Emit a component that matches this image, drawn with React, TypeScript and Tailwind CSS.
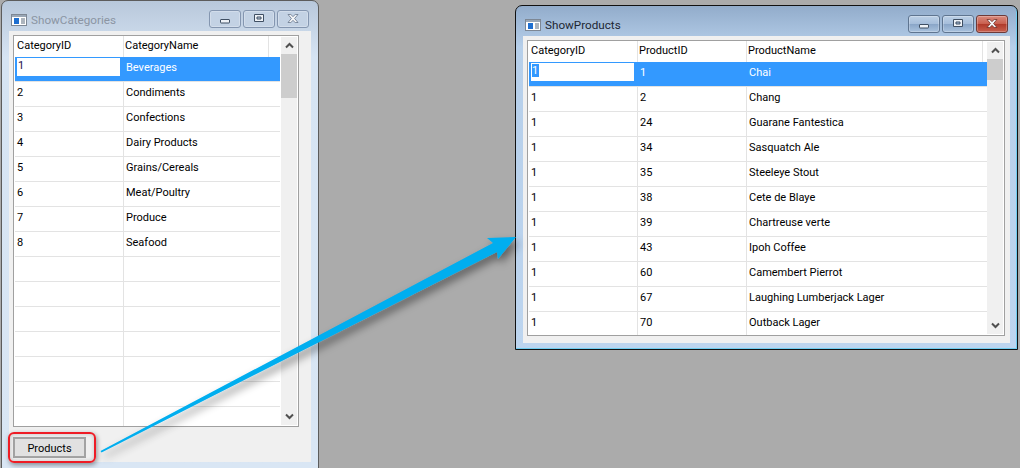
import React from 'react';

const categories = ['Beverages', 'Condiments', 'Confections', 'Dairy Products', 'Grains/Cereals', 'Meat/Poultry', 'Produce', 'Seafood'];

const products: [string, string][] = [
  ['1', 'Chai'],
  ['2', 'Chang'],
  ['24', 'Guarane Fantestica'],
  ['34', 'Sasquatch Ale'],
  ['35', 'Steeleye Stout'],
  ['38', 'Cete de Blaye'],
  ['39', 'Chartreuse verte'],
  ['43', 'Ipoh Coffee'],
  ['60', 'Camembert Pierrot'],
  ['67', 'Laughing Lumberjack Lager'],
  ['70', 'Outback Lager'],
];

const FormIcon: React.FC = () => (
  <svg width="16" height="12" viewBox="0 0 16 12" className="shrink-0">
    <rect x="0.5" y="0.5" width="15" height="11" fill="#ffffff" stroke="#7d8794" />
    <rect x="1" y="1" width="14" height="2" fill="#9aa7b6" />
    <rect x="3" y="4" width="5" height="6" fill="#1f6fd0" />
    <path d="M10 5h4M10 7h4M10 9h4" stroke="#5a6a7c" strokeWidth="1" />
  </svg>
);

const CaptionButton: React.FC<{ kind: 'min' | 'max' | 'close'; active: boolean }> = ({ kind, active }) => {
  const bg =
    kind === 'close' && active
      ? 'bg-[linear-gradient(#d98a7e_0%,#c9604f_48%,#b03a2a_52%,#c8604e_100%)] border-[#6e3a38]'
      : active
        ? 'bg-[linear-gradient(#bcd0e6_0%,#a6bedb_48%,#8aa6c8_52%,#a9c2de_100%)] border-[#5f7590]'
        : 'bg-[#c3d2e4] border-[#8496b0]';
  return (
    <div className={`w-8 h-[18px] rounded-[3px] border flex items-center justify-center shadow-[inset_0_0_0_1px_#ffffff40] ${bg}`}>
      <svg width="14" height="12" viewBox="0 0 14 12">
        {kind === 'min' && <rect x="2.5" y="6.5" width="9" height="3.5" rx="0.5" fill="#eef2f7" stroke="#3f4f63" />}
        {kind === 'max' && (
          <path fillRule="evenodd" d="M2.5 1.5h9v7h-9z M5 4v2h4V4z" fill="#eef2f7" stroke="#3f4f63" />
        )}
        {kind === 'close' && (
          <path d="M2 1.5h2.8L7 3.6l2.2-2.1H12L8.6 5.5 12 9.5H9.2L7 7.4 4.8 9.5H2l3.4-4z" fill="#f4f5f7" stroke={active ? '#6e2e26' : '#66758a'} strokeWidth="0.8" />
        )}
      </svg>
    </div>
  );
};

const Chevron: React.FC<{ up?: boolean }> = ({ up }) => (
  <svg width="9" height="7" viewBox="0 0 9 7" className={up ? '' : 'rotate-180'}>
    <path d="M1 5.5 4.5 2 8 5.5" fill="none" stroke="#505050" strokeWidth="2" />
  </svg>
);

const ScrollBar: React.FC<{ thumb: string }> = ({ thumb }) => (
  <div className="w-[16px] bg-[#f0f0f0] flex flex-col items-center shrink-0 my-px">
    <div className="h-[17px] w-full shrink-0 flex items-center justify-center"><Chevron up /></div>
    <div className={`w-full shrink-0 bg-[#cdcdcd] ${thumb}`} />
    <div className="flex-1" />
    <div className="h-[17px] w-full shrink-0 flex items-center justify-center"><Chevron /></div>
  </div>
);

const HeaderCell: React.FC<{ w: string; pad?: string; children?: React.ReactNode }> = ({ w, pad = 'pl-px', children }) => (
  <div className={`${w} shrink-0 h-full border-r border-[#e3e3e3] flex items-center ${pad}`}>{children}</div>
);

const Cell: React.FC<{ w: string; children?: React.ReactNode; line?: boolean }> = ({ w, children, line = true }) => (
  <div className={`${w} shrink-0 h-full flex items-center overflow-hidden pl-[2px] pb-[2px] ${line ? 'border-r border-[#e3e3e3]' : ''}`}>{children}</div>
);

const Selected: React.FC<{ highlight?: boolean }> = ({ highlight }) => (
  <div className="absolute left-[2px] top-px w-[103px] h-[18px] bg-white text-[#20104a] leading-[15px] pl-px">
    <span className={highlight ? 'bg-[#3399ff] text-white pr-px' : ''}>1</span>
  </div>
);

const Win: React.FC<{ title: string; active: boolean; className: string; children: React.ReactNode }> = ({ title, active, className, children }) => (
  <div
    className={`absolute rounded-t-[7px] border flex flex-col px-[7px] pb-[6px] ${
      active
        ? 'bg-[linear-gradient(#92accb_0%,#b6cfea_12%,#bdd5ef_100%)] border-[#111111] shadow-[inset_-1px_-1px_0_#6fcdf0]'
        : 'bg-[linear-gradient(#b8c8db_0%,#d6e4f3_12%,#d9e6f4_100%)] border-[#5c5c5c]'
    } ${className}`}
  >
    <div className="h-[30px] shrink-0 flex items-center pl-[2px] pr-[2px] pt-[8px]">
      <div className="pr-[4px] flex items-center"><FormIcon /></div>
      <span className={`text-[11.7px] pt-[2px] ${active ? 'text-[#1d2733]' : 'text-[#8b95a3]'}`}>{title}</span>
      <div className="ml-auto flex gap-[2px] -mt-[2px]">
        <CaptionButton kind="min" active={active} />
        <CaptionButton kind="max" active={active} />
        <CaptionButton kind="close" active={active} />
      </div>
    </div>
    <div className="flex-1 min-h-0 bg-[#f0f0f0] flex flex-col">{children}</div>
  </div>
);

export default function App() {
  const emptyRows = Array.from({ length: 7 });

  return (
    <div className="relative w-[1020px] h-[468px] overflow-hidden bg-[#ababab] text-[11px] text-black font-['Roboto',sans-serif]">
      <Win title="ShowCategories" active={false} className="left-[1px] top-0 w-[318px] h-[469px]">
        <div className="flex flex-col pl-[4px] pt-[4px]">
          <div className="w-[286px] h-[392px] border border-[#a0a0a0] bg-white flex overflow-hidden pl-px pr-px">
            <div className="flex-1 min-w-0 flex flex-col overflow-hidden mr-px">
              <div className="h-[21px] shrink-0 flex">
                <HeaderCell w="w-[109px]" pad="pl-[2px]">CategoryID</HeaderCell>
                <HeaderCell w="w-[145px]">CategoryName</HeaderCell>
              </div>
              {categories.map((name, i) => (
                <div key={name} className={`relative h-[25px] shrink-0 flex border-b border-[#e3e3e3] ${i === 0 ? 'bg-[#3399ff] text-white' : ''}`}>
                  {i === 0 && <Selected />}
                  <Cell w="w-[109px]" line={i !== 0}>{i === 0 ? '' : i + 1}</Cell>
                  <Cell w="w-[145px]" line={false}>{name}</Cell>
                </div>
              ))}
              {emptyRows.map((_, i) => (
                <div key={i} className="h-[25px] shrink-0 flex border-b border-[#e3e3e3]">
                  <Cell w="w-[109px]" />
                  <Cell w="w-[145px]" line={false} />
                </div>
              ))}
            </div>
            <ScrollBar thumb="h-[44px]" />
          </div>
          <div className="h-[35px] flex pt-[10px]">
            <button className="w-[73px] h-[21px] border-2 border-[#a3a3a3] bg-[#e1e1e1] text-[11px] text-black pt-[2px]">Products</button>
          </div>
        </div>
      </Win>

      <Win title="ShowProducts" active className="left-[515px] top-[5px] w-[503px] h-[345px]">
        <div className="pl-[4px] pt-[4px]">
          <div className="w-[478px] h-[296px] border border-[#a0a0a0] bg-white flex overflow-hidden pl-px pr-px">
            <div className="flex-1 min-w-0 flex flex-col overflow-hidden">
              <div className="h-[21px] shrink-0 flex">
                <HeaderCell w="w-[109px]" pad="pl-[2px]">CategoryID</HeaderCell>
                <HeaderCell w="w-[109px]">ProductID</HeaderCell>
                <HeaderCell w="w-[236px]">ProductName</HeaderCell>
              </div>
              {products.map(([id, name], i) => (
                <div key={id} className={`relative h-[25px] shrink-0 flex border-b border-[#e3e3e3] ${i === 0 ? 'bg-[#3399ff] text-white' : ''}`}>
                  {i === 0 && <Selected highlight />}
                  <Cell w="w-[109px]" line={i !== 0}>{i === 0 ? '' : '1'}</Cell>
                  <Cell w="w-[109px]" line={i !== 0}>{id}</Cell>
                  <Cell w="w-[240px]" line={false}>{name}</Cell>
                </div>
              ))}
            </div>
            <ScrollBar thumb="h-[21px]" />
          </div>
        </div>
      </Win>

      {/* callout drawn over the screenshot */}
      <div className="absolute left-[8px] top-[432px] w-[88px] h-[31px] rounded-[6px] border-2 border-[#ee1c25] shadow-[1px_2px_5px_#00000066,inset_0_0_4px_#00000033]" />
      <svg className="absolute inset-0 pointer-events-none" width="1020" height="468" viewBox="0 0 1020 468">
        <defs>
          <filter id="arrowShadow" x="-10%" y="-10%" width="120%" height="130%">
            <feDropShadow dx="3" dy="5" stdDeviation="4" floodColor="#000000" floodOpacity="0.45" />
          </filter>
        </defs>
        <polygon points="100.5,451 493,243 487,238 516,237 498,259 497,252 101.5,452.5" fill="#00aeef" filter="url(#arrowShadow)" />
      </svg>
    </div>
  );
}
